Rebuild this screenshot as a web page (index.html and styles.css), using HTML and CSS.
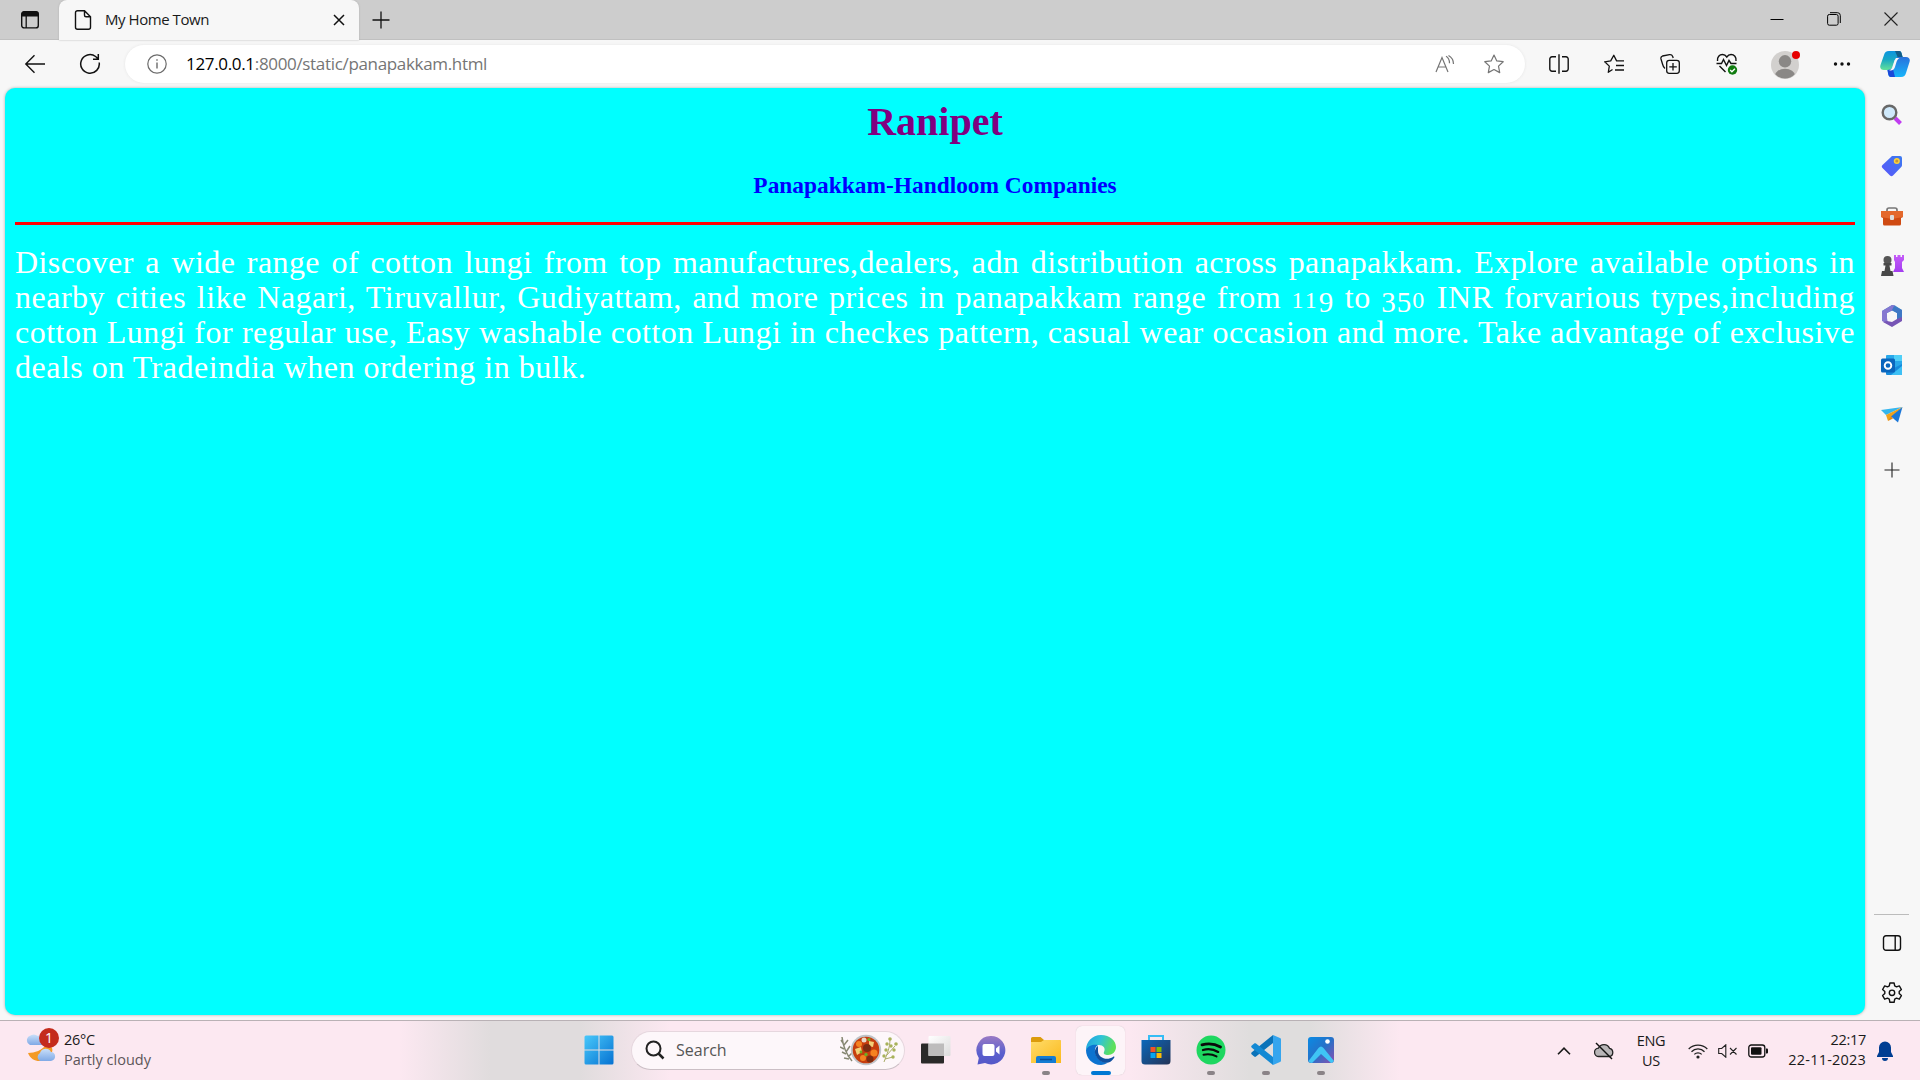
FILE: index.html
```html
<!DOCTYPE html>
<html lang="en">
<head>
<meta charset="utf-8">
<title>My Home Town</title>
<link rel="stylesheet" href="styles.css">
</head>
<body>
<svg width="0" height="0" class="defs">
<defs>
<linearGradient id="blue" x1="0" y1="0" x2="1" y2="1"><stop stop-color="#48c8fa"/><stop offset="1" stop-color="#0672d2"/></linearGradient>
<linearGradient id="teal" x1="0" y1="0" x2="0" y2="1"><stop stop-color="#0b94e0"/><stop offset=".45" stop-color="#18a8c4"/><stop offset="1" stop-color="#63e29a"/></linearGradient>
<linearGradient id="azure" x1="0" y1="0" x2="0" y2="1"><stop stop-color="#2a72dc"/><stop offset="1" stop-color="#17b5fa"/></linearGradient>
<linearGradient id="tag" x1="1" y1="0" x2="0" y2="1"><stop stop-color="#3b7bf0"/><stop offset="1" stop-color="#5a55fa"/></linearGradient>
<linearGradient id="violet" x1="0" y1="0" x2="0" y2="1"><stop stop-color="#c55cf8"/><stop offset="1" stop-color="#a33df0"/></linearGradient>
<linearGradient id="chat" x1="0" y1="0" x2="0" y2="1"><stop stop-color="#9a7ac4"/><stop offset=".6" stop-color="#5a5fcd"/><stop offset="1" stop-color="#5558c8"/></linearGradient>
<linearGradient id="folder" x1="0" y1="0" x2="1" y2="1"><stop stop-color="#ffdc6a"/><stop offset="1" stop-color="#fbb91c"/></linearGradient>
<linearGradient id="edge" x1="0" y1="0" x2="1" y2=".3"><stop stop-color="#1f9fe0"/><stop offset=".5" stop-color="#2fc3d8"/><stop offset="1" stop-color="#5fe05a"/></linearGradient>
<linearGradient id="store" x1="0" y1="0" x2="1" y2="1"><stop stop-color="#0c68bb"/><stop offset="1" stop-color="#243457"/></linearGradient>
<linearGradient id="photo" x1="0" y1="0" x2="1" y2="1"><stop stop-color="#0a8be4"/><stop offset=".5" stop-color="#2671c8"/><stop offset="1" stop-color="#8b4fb0"/></linearGradient>
<linearGradient id="cloud" x1="0" y1="0" x2="0" y2="1"><stop stop-color="#c9dff9"/><stop offset="1" stop-color="#7fa9e6"/></linearGradient>
<linearGradient id="glass" x1="0" y1="0" x2="1" y2="1"><stop stop-color="#ffffff"/><stop offset="1" stop-color="#dcdcdc"/></linearGradient>
</defs>
</svg>

<header class="tabstrip">
  <div class="workspace"><svg width="20" height="20" viewBox="0 0 20 20"><rect x="1.7" y="1.7" width="16.6" height="16.2" rx="2.5" fill="none" stroke="#111" stroke-width="1.4"/><path d="M1.5 6.5V4a2.8 2.8 0 0 1 2.8-2.8h11.4A2.8 2.8 0 0 1 18.500 4v2.500z" fill="#111"/><path d="M6.200 6v12" stroke="#111" stroke-width="1.300"/></svg></div>
  <div class="tab">
    <svg width="18" height="22" viewBox="0 0 18 22" fill="none" stroke="#111" stroke-width="1.4"><path d="M10.500 1.700H3.500a2 2 0 0 0-2 2v14.600a2 2 0 0 0 2 2h11a2 2 0 0 0 2-2V7.700zM10.500 1.700v4.500a1.500 1.500 0 0 0 1.500 1.500h4.500"/></svg>
    <span class="tab-title">My Home Town</span>
    <svg class="tab-close" width="12" height="12" viewBox="0 0 12 12"><path d="M1 1l10 10M11 1L1 11" stroke="#111" stroke-width="1.500"/></svg>
  </div>
  <svg class="newtab" width="18" height="18" viewBox="0 0 18 18"><path d="M9 .5v17M.5 9h17" stroke="#111" stroke-width="1.300"/></svg>
  <div class="window-buttons">
    <svg width="14" height="14" viewBox="0 0 14 14"><path d="M.5 7.500h13" stroke="#000"/></svg>
    <svg width="14" height="14" viewBox="0 0 14 14" fill="none" stroke="#000"><rect x=".6" y="2.500" width="10.500" height="10.700" rx="1.700"/><path d="M3 .7h7.500a2.800 2.800 0 0 1 2.800 2.800v7.500"/></svg>
    <svg width="14" height="14" viewBox="0 0 14 14"><path d="M.5.5l13 13M13.500.5l-13 13" stroke="#222" stroke-width="1.100"/></svg>
  </div>
</header>

<div class="toolbar">
  <svg class="back" width="22" height="20" viewBox="0 0 22 20" fill="none" stroke="#111" stroke-width="1.400"><path d="M10.500 1.200L1.800 10l8.700 8.800M1.800 10H21"/></svg>
  <svg class="reload" width="22" height="22" viewBox="0 0 22 22" fill="none" stroke="#111" stroke-width="1.500"><path d="M20.200 9.500A9.300 9.300 0 1 1 16.600 3.500L19.300 6M19.300 1v5.300H14"/></svg>
  <div class="address">
    <svg width="20" height="20" viewBox="0 0 20 20"><circle cx="10" cy="10" r="9.200" fill="none" stroke="#6b6b6b" stroke-width="1.200"/><path d="M10 8.500v6M10 5.200v1.600" stroke="#6b6b6b" stroke-width="1.400"/></svg>
    <span class="url"><b>127.0.0.1</b>:8000/static/panapakkam.html</span>
    <svg class="read" width="20" height="18" viewBox="0 0 20 18" fill="none" stroke="#757575" stroke-width="1.200"><path d="M1 17L7 2.500 13 17M3.200 12h7.600M11 1.200c2.500 1.300 3.500 3.800 3.500 7M13.500.5c3.500 2 5 5 5 8.500"/></svg>
    <svg width="20" height="20" viewBox="0 0 20 20" fill="none" stroke="#757575" stroke-width="1.200" stroke-linejoin="round"><path d="M10 1l2.800 5.900 6.400.8-4.700 4.400 1.200 6.500L10 15.500l-5.700 3.100 1.200-6.500L.8 7.700l6.400-.8z"/></svg>
  </div>
  <div class="tools">
    <svg width="20" height="20" viewBox="0 0 20 20" fill="none" stroke="#111" stroke-width="1.400"><path d="M7 2.800H3a2.200 2.200 0 0 0-2.200 2.200v10A2.200 2.200 0 0 0 3 17.200h4M13 2.800h4A2.200 2.200 0 0 1 19.200 5v10a2.200 2.200 0 0 1-2.200 2.200h-4M10 .2v19.600"/></svg>
    <svg width="20" height="20" viewBox="0 0 20 20" fill="none" stroke="#111" stroke-width="1.300" stroke-linejoin="round"><path d="M8.500 15.500l-4.200 2.800 1-6.200L.7 7.800l6-.9L9.800 1.200l2.800 5.700H20M12 11.500h8M11 16h9"/></svg>
    <svg width="20" height="20" viewBox="0 0 20 20" fill="none" stroke="#111" stroke-width="1.300"><rect x="6.700" y="6.300" width="12.600" height="13" rx="2.500"/><path d="M13 9v7.500M9.300 12.800h7.500M5 14.500C3.500 13.500 3 12 2.500 10L1 5c-.4-1.500.3-2.500 1.500-3l7-1.300C11 .500 12.200 1.200 12.700 2.500l.5 1.500"/></svg>
    <svg width="22" height="22" viewBox="0 0 22 22" fill="none" stroke="#111" stroke-width="1.400"><path d="M1.500 8C1 4 3.500 1.500 6.500 1.500c2 0 3.500 1.300 4.300 2.500C11.600 2.800 13 1.500 15 1.500c3.200 0 5.500 2.500 5 6.500M.5 10.500h5l2-4 3 6 2.500-5 2 3h5.500M3.500 13l6 6"/><circle cx="16.500" cy="17" r="4.700" fill="#107c10" stroke="none"/><path d="M14.200 17l1.700 1.700 3-3" stroke="#fff"/></svg>
    <svg width="30" height="30" viewBox="0 0 30 30"><clipPath id="face"><circle cx="14" cy="16" r="13.500"/></clipPath><circle cx="14" cy="16" r="14" fill="#d2d0ce"/><g clip-path="url(#face)" fill="#8a8886"><circle cx="14" cy="12.300" r="6.200"/><ellipse cx="14" cy="26.500" rx="10" ry="6.800"/></g><circle cx="25" cy="6" r="4" fill="#e60000"/></svg>
    <svg width="18" height="6" viewBox="0 0 18 6" fill="#111"><circle cx="2.500" cy="3" r="1.700"/><circle cx="9" cy="3" r="1.700"/><circle cx="15.500" cy="3" r="1.700"/></svg>
    <svg width="30" height="28" viewBox="0 0 30 28"><path d="M9 1h10c2 0 2.500 1.500 3 4l1 3h-5c-2 0-3 1-3.500 3l-1.800 6c-.7 2-1.700 3-3.700 3H4c-3 0-4.500-2-3.500-5L4 5c.8-2.500 2-4 5-4z" fill="url(#teal)"/><path d="M15 1h4c2 0 2.500 1.500 3 4l1 3h-5z" fill="#125d89"/><path d="M21 27H11c-2 0-2.500-1.500-3-4l-.5-3c3 0 4.500-1 5-3l2.500-7c.7-2 1.700-3 3.700-3H26c3 0 4.500 2 3.500 5L26 23c-.8 2.500-2 4-5 4z" fill="url(#azure)"/><path d="M15 27h-4c-2 0-2.500-1.500-3-4l-.5-3c3 0 4.500-1 5-3z" fill="#1b48d8"/><path d="M16 8h3.500c-1.500 1-2.500 2-3 4l-1.700 5.500c-.8 2-2 3-4 3H9c1.500-.7 2.700-1.700 3.300-3.500l2.200-6.500z" fill="#f7f7f7"/></svg>
  </div>
</div>

<div class="viewport">
  <main class="page">
    <h1>Ranipet</h1>
    <h3>Panapakkam-Handloom Companies</h3>
    <hr>
    <p>
      <span class="line first">Discover a wide range of cotton lungi from top manufactures,dealers, adn distribution across panapakkam. Explore available options in</span>
      <span class="line">nearby cities like Nagari, Tiruvallur, Gudiyattam, and more prices in panapakkam range from <span class="num">11<i>9</i></span> to <span class="num"><i>35</i>0</span> INR forvarious types,including</span>
      <span class="line">cotton Lungi for regular use, Easy washable cotton Lungi in checkes pattern, casual wear occasion and more. Take advantage of exclusive</span>
      <span class="line last">deals on Tradeindia when ordering in bulk.</span>
    </p>
  </main>
  <aside class="sidebar">
    <svg width="22" height="22" viewBox="0 0 22 22"><path d="M14 14l5.500 5.500" stroke="#c03cf0" stroke-width="4"/><circle cx="8.500" cy="8.500" r="6.800" fill="#cfe9fb" stroke="#686868" stroke-width="2.400"/></svg>
    <svg width="22" height="22" viewBox="0 0 22 22"><path d="M12 1h7a2 2 0 0 1 2 2v7c0 1-.3 1.500-1 2.200L12 20.500c-1 1-2 1-3 0L1.500 13c-1-1-1-2 0-3L10 2c.6-.7 1-1 2-1z" fill="url(#tag)"/><circle cx="15.800" cy="6" r="2.300" fill="#c9963a" stroke="#ffd33a" stroke-width="1.500"/></svg>
    <svg width="24" height="20" viewBox="0 0 24 20"><path d="M7 6V4a2 2 0 0 1 2-2h6a2 2 0 0 1 2 2v2" fill="none" stroke="#777" stroke-width="1.700"/><path d="M1 5h22v6l-2 1v6a1.500 1.500 0 0 1-1.500 1.500h-15A1.500 1.500 0 0 1 3 18v-6l-2-1z" fill="#cf4a12"/><path d="M1 5h22v6l-11 2L1 11z" fill="#e4682c"/><rect x="10" y="9" width="4" height="5" rx="1" fill="#ddd"/></svg>
    <svg width="24" height="24" viewBox="0 0 24 24"><path d="M14 1h2v2h1.500V1h3v2H22V1h2v5l-2 2v6l2 4H13l2-4V8l-1-2z" fill="url(#violet)"/><circle cx="7.500" cy="6" r="4" fill="#555"/><path d="M3.500 9h8v2.500h-2l1 5.500h2l1 5H1l1-5h2.500l1-5.500h-2z" fill="#484848"/></svg>
    <svg width="22" height="24" viewBox="0 0 22 24"><path d="M11 1l3 .5 7 4.500v9l-5-4V9L11 6.500 6 9l-1 6-4 1V7z" fill="#3d88c8"/><path d="M11 1L1 7v10l6 3-1-6V9l6-3 2-4.500z" fill="#8577d0"/><path d="M21 7v10l-10 6-9-5 4-1 5 1 5-3V9z" fill="#7755b5"/><path d="M21 6v7l-5 2V9l-5-3 2-4z" fill="#3e78c5"/><circle cx="11" cy="12" r="4.300" fill="#f7f7f7"/></svg>
    <svg width="22" height="22" viewBox="0 0 22 22"><path d="M6 1h14a1 1 0 0 1 1 1v12H5V2a1 1 0 0 1 1-1z" fill="#28a8ea"/><path d="M13 1h8v6h-8z" fill="#50d0f8"/><path d="M5 10l8 4 8-4v10a1 1 0 0 1-1 1H6a1 1 0 0 1-1-1z" fill="#168bdc"/><path d="M10 21l11-9v8a1 1 0 0 1-1 1z" fill="#3dc0f5"/><rect x="0" y="4.500" width="14" height="14" rx="1.500" fill="#0a66bd"/><circle cx="7" cy="11.500" r="3.300" fill="none" stroke="#fff" stroke-width="1.900"/></svg>
    <svg width="22" height="18" viewBox="0 0 22 18"><path d="M21.500 1L0 4l5 5z" fill="#35b6ee"/><path d="M21.500 1L5 9l2 6z" fill="#f2a21c"/><path d="M21.500 1L10 10.500l7 6z" fill="#1b77d8"/><path d="M7 15l3-4.500 2 2z" fill="#e58612"/></svg>
    <svg width="16" height="16" viewBox="0 0 16 16"><path d="M.5 8h15M8 .5v15" stroke="#222" stroke-width="1.100"/></svg>
    <div class="side-bottom">
      <svg width="20" height="16" viewBox="0 0 20 16" fill="none" stroke="#111" stroke-width="1.400"><rect x="1.500" y=".8" width="17" height="14.400" rx="2.500"/><path d="M13.200 1v14"/></svg>
      <svg width="22" height="22" viewBox="0 0 22 22" fill="none" stroke="#111" stroke-width="1.400" stroke-linejoin="round"><path d="M8.900 1h4.200l.6 2.900 1.800 1 2.800-1 2.100 3.600-2.200 2v2.100l2.200 2-2.100 3.600-2.800-1-1.800 1-.6 3.100H8.900l-.6-3.100-1.800-1-2.800 1-2.100-3.600 2.200-2V9.500l-2.200-2 2.100-3.600 2.800 1 1.800-1z"/><circle cx="11" cy="10.800" r="2.700"/></svg>
    </div>
  </aside>
</div>

<footer class="taskbar">
  <div class="weather">
    <svg width="36" height="36" viewBox="0 0 36 36"><path d="M4 26c7 0 14-3 18-8 8 0 8 7 3 12-6 6-17 6-21-4z" fill="#f49a26"/><path d="M6 18a5 5 0 0 1-.5-9A7 7 0 0 1 14 9a5 5 0 0 1 6 9z" fill="url(#cloud)"/><path d="M16 34a4.500 4.500 0 0 1 0-8 6 6 0 0 1 11-1c5 0 6 8 0 9z" fill="url(#cloud)"/><circle cx="25" cy="11" r="10" fill="#c42b1c"/><text x="25" y="16" text-anchor="middle" class="badge">1</text></svg>
    <div class="weather-text"><span>26°C</span><span class="sub">Partly cloudy</span></div>
  </div>
  <div class="apps">
    <svg class="start" width="30" height="30" viewBox="0 0 30 30" fill="url(#blue)"><path d="M2 .5h12.500v14H.5V2A1.500 1.500 0 0 1 2 .5zM15.500.5H28A1.500 1.500 0 0 1 29.500 2v12.500h-14zM.5 15.500h14v14H2A1.500 1.500 0 0 1 .5 28zM15.500 15.500h14V28a1.500 1.500 0 0 1-1.500 1.500H15.500z"/></svg>
    <div class="search">
      <svg width="20" height="20" viewBox="0 0 20 20" fill="none" stroke="#222" stroke-width="2"><circle cx="8.500" cy="8.500" r="7"/><path d="M13.500 13.500l5 5" stroke-width="2.500"/></svg>
      <span>Search</span>
      <svg width="58" height="32" viewBox="0 0 58 32"><g stroke="#878873" stroke-width="1.500" fill="none"><path d="M2 3c1 9 4 17 10 24M3 9L1 6M4 11l4-5M4 15l-4-2M6 18l4-6M6 20l-4-2M8 23l4-4M9 25l-5-1"/></g><circle cx="26" cy="16" r="15.200" fill="#bfc4c9"/><circle cx="26" cy="16" r="13.300" fill="#c63d0e"/><g fill="#f58220"><circle cx="19" cy="10" r="3"/><circle cx="34" cy="19" r="3.600"/><circle cx="23" cy="24" r="3"/></g><g fill="#f3cf77"><path d="M29 7l5 1-1 5-4-1zM15 15l6-2 1 5-5 3z"/></g><g fill="#7b2d12"><circle cx="27" cy="14" r="4"/><circle cx="30" cy="25" r="3.500"/></g><circle cx="24" cy="6" r="2.500" fill="#ead9c8"/><g fill="#6fae23"><circle cx="29" cy="5.500" r="1.600"/><circle cx="26" cy="20.500" r="1.700"/><circle cx="21" cy="18" r="1.400"/></g><g stroke="#a9ac68" fill="none"><path d="M44 28c3-8 6-14 6-23M46 22l9-10M45 25l8-2"/></g><g fill="#a8b25a"><circle cx="50" cy="5" r="1.800"/><circle cx="47" cy="10" r="1.700"/><circle cx="51" cy="12" r="1.700"/><circle cx="56" cy="10" r="1.800"/><circle cx="46" cy="16" r="1.700"/><circle cx="54" cy="16" r="1.700"/><circle cx="53" cy="23" r="1.700"/><circle cx="44" cy="22" r="1.700"/></g></svg>
    </div>
    <div class="app"><svg width="30" height="30" viewBox="0 0 30 30"><rect x="0" y="8.500" width="23" height="20" rx="1" fill="#2a2a29"/><rect x="7.500" y="1" width="22" height="20" rx="1" fill="url(#glass)"/><path d="M7.500 8.500H23V21H7.500z" fill="#bdbcbc"/></svg></div>
    <div class="app"><svg width="30" height="30" viewBox="0 0 30 30"><path d="M15 1a14.200 14.200 0 1 1-6 27l-7.500 1.500 1.300-6.500A14.200 14.200 0 0 1 15 1z" fill="url(#chat)"/><rect x="6.500" y="9" width="12" height="12" rx="2" fill="#fff"/><path d="M20 13.500l3.500-3v9l-3.500-3z" fill="#fff"/></svg></div>
    <div class="app run"><svg width="30" height="30" viewBox="0 0 30 30"><path d="M0 3.500A1.500 1.500 0 0 1 1.500 2h8L13 5h15.500A1.500 1.500 0 0 1 30 6.500V16H0z" fill="#dc9c0c"/><path d="M0 7h10l3-2h15.500A1.500 1.500 0 0 1 30 6.500V28H0z" fill="url(#folder)"/><path d="M5 28v-5a2 2 0 0 1 2-2h16a2 2 0 0 1 2 2v5z" fill="#147cd3"/><path d="M9 24.500h12" stroke="#0b4d96" stroke-width="1.500"/></svg></div>
    <div class="app active"><svg width="30" height="30" viewBox="0 0 30 30"><path d="M0 15C0 7 6 0 15 0c9 0 15 6 15 12 0 5-4 8-8 8-3 0-5-1-4-3 2-4-1-7-5-7C7 10 1 14 0 15z" fill="url(#edge)"/><path d="M0 15c2-5 8-6 12-5-3 2-4 5-2 10 2 5 8 9 13 7-3 2-6 3-8 3C6 30 0 23 0 15z" fill="#0c73d0"/><path d="M12 11c-3 2-4 6-2 10 3 6 9 8 14 6 2-1 3-3 4-4 1-1 0-2-1-1-6 4-15 1-15-6 0-2 0-3 0-5z" fill="#10509f"/></svg></div>
    <div class="app"><svg width="30" height="30" viewBox="0 0 30 30"><path d="M8 6V1h14v5" fill="none" stroke="#35bdf5" stroke-width="2"/><path d="M.5 5h29v21a3.500 3.500 0 0 1-3.500 3.500H4A3.500 3.500 0 0 1 .5 26z" fill="url(#store)"/><path d="M9.500 12h5v5h-5z" fill="#f35325"/><path d="M15.500 12h5v5h-5z" fill="#81bc06"/><path d="M9.500 18h5v5h-5z" fill="#05a6f0"/><path d="M15.500 18h5v5h-5z" fill="#ffba08"/></svg></div>
    <div class="app run"><svg width="30" height="30" viewBox="0 0 30 30"><circle cx="15" cy="15" r="14.500" fill="#1ed760"/><g fill="none" stroke="#0a0a0a" stroke-linecap="round"><path d="M6 9.800c6-1.700 13-1 18.500 2.200" stroke-width="2.800"/><path d="M7 15c5-1.400 10.500-.8 15.200 1.900" stroke-width="2.300"/><path d="M7.500 19.700c4.500-1 9-.5 13 1.700" stroke-width="2"/></g></svg></div>
    <div class="app run"><svg width="30" height="30" viewBox="0 0 30 30"><path d="M22 0v8L5 21.500c-.6.500-1.200.5-1.800 0L.8 19.500c-.8-.7-.8-1.500 0-2.200z" fill="#0b73b9"/><path d="M22 30v-8L5 8.500c-.6-.5-1.200-.5-1.800 0L.8 10.500c-.8.700-.8 1.500 0 2.200z" fill="#1389d4"/><path d="M22 0l7 3c.7.300 1 .8 1 1.500v21c0 .7-.3 1.200-1 1.500l-7 3z" fill="#35a5ee"/></svg></div>
    <div class="app run"><svg width="30" height="30" viewBox="0 0 30 30"><rect x="2" y="2" width="26" height="26" rx="3" fill="url(#photo)"/><circle cx="21.500" cy="6.500" r="2.300" fill="#fff"/><path d="M2.500 26L12.500 13c1.700-2 3.300-2 5 0L28 26c-1 1.500-2 2-3 2l-10-9-9 9c-1.500 0-3-1-3.500-2z" fill="#3fc5f5"/></svg></div>
  </div>
  <div class="tray">
    <svg class="chev" width="14" height="8" viewBox="0 0 14 8"><path d="M1 7.200l6-6 6 6" fill="none" stroke="#1a1a1a" stroke-width="1.600"/></svg>
    <svg class="onedrive" width="20" height="18" viewBox="0 0 20 18"><path d="M5 14.500a4.200 4.200 0 0 1-.5-8.400 6 6 0 0 1 11 .2 4.200 4.200 0 0 1 0 8.200z" fill="#b8b5b7" stroke="#222" stroke-width="1.300"/><path d="M2 1l16 16" stroke="#111" stroke-width="1.500"/></svg>
    <div class="lang"><span>ENG</span><span>US</span></div>
    <svg class="wifi" width="20" height="16" viewBox="0 0 20 16" fill="none" stroke="#222" stroke-width="1.300"><path d="M.7 6a13 13 0 0 1 18.600 0M3.500 8.700a9 9 0 0 1 13 0M6.300 11.400a5.300 5.300 0 0 1 7.400 0"/><circle cx="10" cy="14" r="1.600" fill="#222" stroke="none"/></svg>
    <svg class="mute" width="20" height="14" viewBox="0 0 20 14" fill="none" stroke="#222" stroke-width="1.100"><path d="M.7 4.500h3L7.800.8v12.400L3.700 9.500h-3zM12 4l6.500 6.500M18.500 4L12 10.500"/></svg>
    <svg class="battery" width="20" height="14" viewBox="0 0 20 14"><rect x=".8" y="1" width="16" height="12" rx="2.500" fill="none" stroke="#111" stroke-width="1.300"/><rect x="3" y="3.200" width="10.500" height="7.600" rx="1" fill="#111"/><path d="M18 4.500h1a1 1 0 0 1 1 1v3a1 1 0 0 1-1 1h-1z" fill="#111"/></svg>
    <div class="clock"><span>22:17</span><span class="date">22-11-2023</span></div>
    <svg class="bell" width="16" height="20" viewBox="0 0 16 20" fill="#003e92"><path d="M8 .5a6 6 0 0 1 6 6V11l2 4v1H0v-1l2-4V6.500a6 6 0 0 1 6-6zM5 17h6a3 3 0 0 1-6 0z"/></svg>
  </div>
</footer>
</body>
</html>
```
FILE: styles.css
```css
* { box-sizing: border-box; }
body { margin: 0; width: 1920px; height: 1080px; overflow: hidden; display: flex; flex-direction: column; background: #f7f7f7; font-family: "Open Sans", "Noto Sans", sans-serif; color: #1a1a1a; }
svg { display: block; flex: none; }
.defs { position: absolute; }

.tabstrip { height: 40px; flex: none; display: flex; background: #cdcdcd; box-shadow: inset 0 -1px #c0c0c0; }
.workspace { width: 59px; padding: 10px 0 0 20px; }
.tab { width: 300px; height: 40px; background: #f7f7f7; border-radius: 8px 8px 0 0; box-shadow: 0 0 2px #aaa; display: flex; align-items: center; padding: 0 14px 0 15px; }
.tab-title { margin: -2px 0 0 13px; flex: 1; font-size: 15px; letter-spacing: -.45px; white-space: nowrap; }
.newtab { margin: 11px 0 0 13px; }
.window-buttons { margin-left: auto; padding: 12px 22px 0 0; display: flex; gap: 43px; }

.toolbar { height: 48px; flex: none; display: flex; align-items: center; }
.back { margin-left: 24px; }
.reload { margin-left: 33px; }
.address { margin: -1px 0 0 24px; width: 1400px; height: 38px; border-radius: 19px; background: #fff; box-shadow: 0 0 3px #e4e4e4; display: flex; align-items: center; padding: 0 21px 0 22px; }
.url { margin-left: 19px; flex: 1; font-size: 17px; letter-spacing: -.33px; color: #757575; white-space: nowrap; }
.url b { font-weight: 400; color: #000; }
.read { margin-right: 29px; }
.tools { flex: 1; display: flex; align-items: center; padding-left: 24px; gap: 35px; }
.tools svg:nth-child(n+3) { margin-left: 1px; }
.tools svg:nth-child(5) { margin-left: -2px; }
.tools svg:nth-child(6) { margin-left: -3px; }
.tools svg:nth-child(7) { margin-left: -6px; }

.viewport { height: 932px; flex: none; display: flex; padding: 0 0 5px 5px; }
.page { width: 1860px; background: #0ff; border-radius: 10px; box-shadow: 0 0 3px #aaa; padding: 11px 10px 10px; font-family: "Liberation Serif", serif; }
.page h1 { margin: 0; font-size: 40px; line-height: 46px; text-align: center; color: purple; }
.page h3 { margin: 27px 0 0; font-size: 23.4px; line-height: 27px; text-align: center; color: blue; }
.page hr { margin: 23px 0 0; height: 3px; border: 0; background: red; }
.page p { margin: 20px 0 0; font-size: 32px; line-height: 35px; letter-spacing: .5px; color: #fff; }
.line { display: block; text-align: justify; text-align-last: justify; white-space: nowrap; }
.first { letter-spacing: .4px; }
.last { text-align-last: left; }
.num { font-size: 24px; line-height: 0; letter-spacing: 2px; }
.num i { font-style: normal; font-size: 29px; vertical-align: -4px; letter-spacing: 1px; }

.sidebar { width: 55px; display: flex; flex-direction: column; align-items: center; padding: 16px 2px 11px 0; gap: 28px; }
.sidebar > svg:nth-child(2) { margin-top: 1px; }
.sidebar > svg:nth-child(3) { margin-top: 1px; }
.sidebar > svg:nth-child(5) { margin-top: -2px; }
.sidebar > svg:nth-child(6) { margin-top: -2px; }
.sidebar > svg:nth-child(7) { margin-top: 2px; }
.sidebar > svg:nth-child(8) { margin-top: 10px; }
.side-bottom { margin-top: auto; width: 35px; display: flex; flex-direction: column; align-items: center; gap: 31px; border-top: 1px solid #bcbcbc; padding-top: 20px; }

.taskbar { height: 60px; flex: none; border-top: 1px solid #b9b1b5; display: flex; background: linear-gradient(90deg, #fce8f1 0 400px, #e0dcdd 490px 580px, #fce8f1 670px 1130px, #dfdddd 1250px 1310px, #fce8f1 1400px); }
.weather { width: 584px; display: flex; padding: 6px 0 0 24px; }
.weather-text { margin-left: 4px; padding-top: 3px; font-size: 14.5px; line-height: 20px; letter-spacing: -.3px; display: flex; flex-direction: column; }
.sub { color: #5c565a; letter-spacing: 0; }
.badge { font-size: 14px; fill: #fff; }
.apps { display: flex; align-items: center; padding-bottom: 1px; }
.search { margin: 0 6px 0 17px; width: 274px; height: 39px; border-radius: 20px; background: #fdf7fa; border: 1px solid #e6d7de; border-bottom-color: #cbbfc5; display: flex; align-items: center; padding: 0 6px 0 13px; }
.search span { flex: 1; margin-left: 11px; font-size: 16px; color: #555; }
.app { width: 49px; height: 49px; margin-right: 6px; border-radius: 6px; display: flex; justify-content: center; align-items: center; position: relative; }
.run::after, .active::after { content: ""; position: absolute; bottom: 0; width: 8px; height: 4px; border-radius: 2px; background: #8a8387; }
.active { background: #fdf4f8; box-shadow: 0 0 1px #c9bdc3; }
.active::after { width: 20px; background: #0078d4; }
.tray { margin-left: auto; display: flex; align-items: center; padding-right: 27px; font-size: 14.5px; line-height: 20px; letter-spacing: -.3px; }
.lang { width: 30px; margin: 0 22px; display: flex; flex-direction: column; align-items: center; }
.onedrive { margin-left: 23px; }
.mute { margin-left: 10px; }
.battery { margin-left: 10px; }
.clock { width: 78px; margin: -2px 11px 0 20px; display: flex; flex-direction: column; align-items: flex-end; white-space: nowrap; }
.date { letter-spacing: .2px; }
```
